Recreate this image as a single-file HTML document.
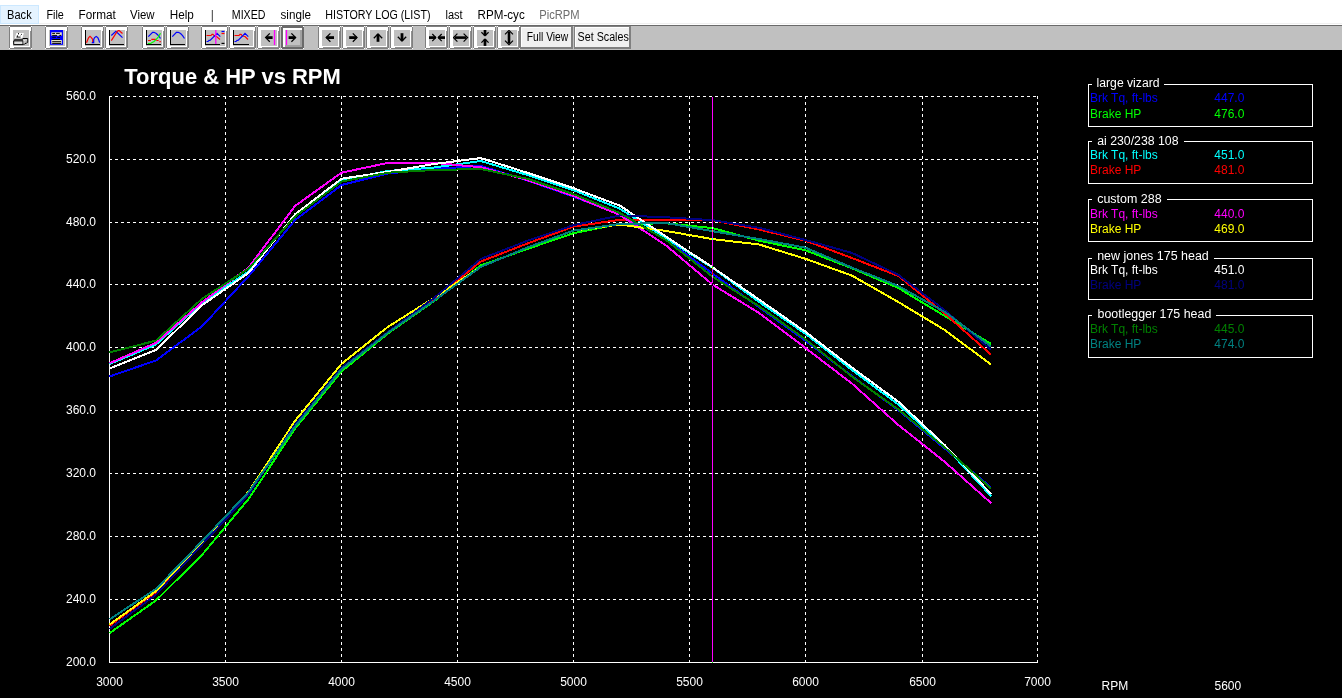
<!DOCTYPE html>
<html><head><meta charset="utf-8"><title>Torque &amp; HP vs RPM</title>
<style>
html,body{margin:0;padding:0;background:#000;}
body{width:1342px;height:698px;position:relative;overflow:hidden;font-family:"Liberation Sans",sans-serif;}
#menu{position:absolute;left:0;top:0;width:1342px;height:25px;background:#fff;}
#menu .hl{position:absolute;left:0;top:5px;width:39px;height:19px;background:#e5f3ff;border:1px solid #cce8ff;box-sizing:border-box;}
.m{position:absolute;top:7px;font-size:12px;line-height:14px;color:#000;white-space:nowrap;transform-origin:0 50%;}
#tbar{position:absolute;left:0;top:25px;width:1342px;height:25px;background:#c0c0c0;border-top:1px solid #6a6a6a;box-sizing:border-box;}
.b{position:absolute;top:0px;height:23px;box-sizing:border-box;border:1px solid #808080;background:#fff;}
.b i{position:absolute;width:1px;height:1px;background:#fff;}
.b i:nth-child(1){left:-1px;top:-1px}.b i:nth-child(2){right:-1px;top:-1px}.b i:nth-child(3){left:-1px;bottom:-1px}.b i:nth-child(4){right:-1px;bottom:-1px}
.b .f{position:absolute;left:3px;top:3px;right:1px;bottom:1px;background:#c0c0c0;border-right:1px solid #fff;border-bottom:1px solid #fff;box-shadow:1px 1px 0 #909090;}
.b .f svg{display:block}
.b.p{border:2px solid #6a6a6a;}
.b.p .f{left:2px;top:2px;right:0;bottom:0;border:none;box-shadow:none;border-right:2px solid #a0a0a0;border-bottom:2px solid #a0a0a0}
.b.p i:nth-child(1){left:-2px;top:-2px}.b.p i:nth-child(2){right:-2px;top:-2px}.b.p i:nth-child(3){left:-2px;bottom:-2px}.b.p i:nth-child(4){right:-2px;bottom:-2px}
.tb{position:absolute;top:0px;height:23px;box-sizing:border-box;border:1px solid #808080;border-right-width:2px;border-bottom-width:2px;background:#f0f0f0;box-shadow:inset 1px 1px 0 #fff;overflow:hidden;font-size:12px;}
.tb span{position:absolute;top:4px;line-height:14px;white-space:nowrap;color:#000;transform-origin:0 50%;}
#chart{position:absolute;left:0;top:0;}
#chart{fill:#fff}
#chart text,#menu text,.tb text{font-family:"Liberation Sans",sans-serif;font-size:12px;}
#menu text,.tb text{fill:#000}
#chart .g line{stroke:#fff;stroke-width:1;stroke-dasharray:3 3;shape-rendering:crispEdges;}
#chart .c polyline{fill:none;stroke-width:2;shape-rendering:crispEdges;stroke-linejoin:round;}
</style></head><body>
<svg id="chart" width="1342" height="698" viewBox="0 0 1342 698">
<rect x="0" y="50" width="1342" height="648" fill="#000"/>
<text x="124.3" y="84.2" style="font-size:22px;font-weight:bold" textLength="216.5" lengthAdjust="spacingAndGlyphs">Torque &amp; HP vs RPM</text>
<g class="g"><line x1="109" y1="96.5" x2="1038" y2="96.5"/><line x1="109" y1="159.5" x2="1038" y2="159.5"/><line x1="109" y1="222.5" x2="1038" y2="222.5"/><line x1="109" y1="284.5" x2="1038" y2="284.5"/><line x1="109" y1="347.5" x2="1038" y2="347.5"/><line x1="109" y1="410.5" x2="1038" y2="410.5"/><line x1="109" y1="473.5" x2="1038" y2="473.5"/><line x1="109" y1="536.5" x2="1038" y2="536.5"/><line x1="109" y1="599.5" x2="1038" y2="599.5"/><line x1="225.5" y1="96" x2="225.5" y2="662"/><line x1="341.5" y1="96" x2="341.5" y2="662"/><line x1="457.5" y1="96" x2="457.5" y2="662"/><line x1="573.5" y1="96" x2="573.5" y2="662"/><line x1="689.5" y1="96" x2="689.5" y2="662"/><line x1="805.5" y1="96" x2="805.5" y2="662"/><line x1="922.5" y1="96" x2="922.5" y2="662"/><line x1="1037.5" y1="96" x2="1037.5" y2="662"/></g>
<path d="M109.5 96V662.5H1038" fill="none" stroke="#fff" stroke-width="1" shape-rendering="crispEdges"/>
<g class="c"><polyline points="109.5,376.5 155.9,360.5 202.3,326.1 248.7,276.0 295.1,220.0 341.5,185.0 387.9,173.5 434.3,169.0 480.7,165.8 527.1,180.4 573.5,196.7 619.9,214.4 666.3,239.6 712.7,273.7 759.1,307.3 805.5,340.8 851.9,376.0 898.3,410.2 944.7,448.5 991.1,487.5" stroke="#0000ff"/>
<polyline points="109.5,633.2 155.9,600.5 202.3,554.6 248.7,498.8 295.1,428.6 341.5,371.4 387.9,333.5 434.3,301.0 480.7,265.5 527.1,249.0 573.5,233.2 619.9,224.0 666.3,223.3 712.7,228.1 759.1,240.7 805.5,250.3 851.9,268.3 898.3,288.0 944.7,316.0 991.1,344.0" stroke="#00ff00"/>
<polyline points="109.5,364.1 155.9,344.6 202.3,302.6 248.7,271.3 295.1,215.3 341.5,180.4 387.9,171.0 434.3,167.5 480.7,161.0 527.1,174.9 573.5,190.2 619.9,208.7 666.3,238.4 712.7,267.9 759.1,302.0 805.5,333.8 851.9,370.0 898.3,404.5 944.7,446.2 991.1,496.2" stroke="#00ffff"/>
<polyline points="109.5,625.8 155.9,592.1 202.3,543.0 248.7,494.0 295.1,425.0 341.5,368.5 387.9,332.0 434.3,299.4 480.7,261.6 527.1,243.6 573.5,226.6 619.9,219.8 666.3,219.9 712.7,220.2 759.1,229.5 805.5,240.7 851.9,258.0 898.3,276.0 944.7,313.5 991.1,354.7" stroke="#ff0000"/>
<polyline points="109.5,363.3 155.9,342.9 202.3,302.0 248.7,267.4 295.1,205.9 341.5,172.7 387.9,162.9 434.3,162.9 480.7,167.2 527.1,180.0 573.5,195.9 619.9,215.0 666.3,245.7 712.7,284.7 759.1,313.0 805.5,348.0 851.9,383.5 898.3,424.9 944.7,461.8 991.1,503.1" stroke="#ff00ff"/>
<polyline points="109.5,624.6 155.9,591.2 202.3,542.0 248.7,491.6 295.1,420.8 341.5,363.9 387.9,326.9 434.3,297.7 480.7,267.0 527.1,247.6 573.5,230.6 619.9,224.5 666.3,231.0 712.7,239.1 759.1,244.5 805.5,258.8 851.9,275.6 898.3,302.0 944.7,330.0 991.1,364.6" stroke="#ffff00"/>
<polyline points="109.5,368.5 155.9,350.0 202.3,305.0 248.7,272.8 295.1,214.3 341.5,178.7 387.9,171.8 434.3,164.0 480.7,158.0 527.1,172.7 573.5,188.2 619.9,205.6 666.3,236.7 712.7,267.4 759.1,299.6 805.5,331.9 851.9,367.5 898.3,401.7 944.7,445.1 991.1,493.9" stroke="#ffffff"/>
<polyline points="109.5,628.9 155.9,594.7 202.3,544.3 248.7,494.5 295.1,424.3 341.5,367.7 387.9,332.0 434.3,297.7 480.7,259.0 527.1,240.9 573.5,225.2 619.9,215.4 666.3,217.3 712.7,220.2 759.1,227.8 805.5,240.0 851.9,252.9 898.3,274.8 944.7,310.2 991.1,349.8" stroke="#000080"/>
<polyline points="109.5,352.5 155.9,340.6 202.3,298.6 248.7,268.5 295.1,216.5 341.5,181.6 387.9,172.7 434.3,170.0 480.7,169.0 527.1,178.7 573.5,194.2 619.9,213.0 666.3,240.2 712.7,276.8 759.1,306.3 805.5,339.4 851.9,376.5 898.3,409.5 944.7,447.4 991.1,488.6" stroke="#008000"/>
<polyline points="109.5,619.4 155.9,589.0 202.3,540.9 248.7,491.8 295.1,426.5 341.5,369.2 387.9,332.7 434.3,300.5 480.7,267.0 527.1,247.6 573.5,230.6 619.9,223.9 666.3,223.0 712.7,231.2 759.1,239.0 805.5,247.7 851.9,267.6 898.3,286.0 944.7,311.9 991.1,346.5" stroke="#008080"/></g>
<line x1="712.5" y1="97" x2="712.5" y2="663" stroke="#ff00ff" stroke-width="1" shape-rendering="crispEdges" style="mix-blend-mode:difference"/>
<g><text x="96" y="100" text-anchor="end">560.0</text><text x="96" y="163" text-anchor="end">520.0</text><text x="96" y="226" text-anchor="end">480.0</text><text x="96" y="288" text-anchor="end">440.0</text><text x="96" y="351" text-anchor="end">400.0</text><text x="96" y="414" text-anchor="end">360.0</text><text x="96" y="477" text-anchor="end">320.0</text><text x="96" y="540" text-anchor="end">280.0</text><text x="96" y="603" text-anchor="end">240.0</text><text x="96" y="666" text-anchor="end">200.0</text></g><g><text x="109.5" y="686" text-anchor="middle">3000</text><text x="225.5" y="686" text-anchor="middle">3500</text><text x="341.5" y="686" text-anchor="middle">4000</text><text x="457.5" y="686" text-anchor="middle">4500</text><text x="573.5" y="686" text-anchor="middle">5000</text><text x="689.5" y="686" text-anchor="middle">5500</text><text x="805.5" y="686" text-anchor="middle">6000</text><text x="922.5" y="686" text-anchor="middle">6500</text><text x="1037.5" y="686" text-anchor="middle">7000</text></g>
<text x="1101.5" y="690.3">RPM</text><text x="1214.5" y="690.3">5600</text>
<g><path d="M1092 84.5 H1088.5 V126.5 H1312.5 V84.5 H1164" fill="none" stroke="#fff" stroke-width="1" shape-rendering="crispEdges"/><text x="1096.6" y="86.8" fill="#fff" textLength="62.9" lengthAdjust="spacingAndGlyphs">large vizard</text><text x="1090" y="101.7" fill="#0000ff">Brk Tq, ft-lbs</text><text x="1214.3" y="101.7" fill="#0000ff">447.0</text><text x="1090" y="117.5" fill="#00ff00">Brake HP</text><text x="1214.3" y="117.5" fill="#00ff00">476.0</text><path d="M1092 141.5 H1088.5 V183.5 H1312.5 V141.5 H1184" fill="none" stroke="#fff" stroke-width="1" shape-rendering="crispEdges"/><text x="1097.2" y="144.5" fill="#fff" textLength="81.3" lengthAdjust="spacingAndGlyphs">ai 230/238 108</text><text x="1090" y="159.4" fill="#00ffff">Brk Tq, ft-lbs</text><text x="1214.3" y="159.4" fill="#00ffff">451.0</text><text x="1090" y="174.3" fill="#ff0000">Brake HP</text><text x="1214.3" y="174.3" fill="#ff0000">481.0</text><path d="M1092 199.5 H1088.5 V241.5 H1312.5 V199.5 H1167" fill="none" stroke="#fff" stroke-width="1" shape-rendering="crispEdges"/><text x="1097.2" y="202.7" fill="#fff" textLength="64.5" lengthAdjust="spacingAndGlyphs">custom 288</text><text x="1090" y="217.6" fill="#ff00ff">Brk Tq, ft-lbs</text><text x="1214.3" y="217.6" fill="#ff00ff">440.0</text><text x="1090" y="232.5" fill="#ffff00">Brake HP</text><text x="1214.3" y="232.5" fill="#ffff00">469.0</text><path d="M1092 258.5 H1088.5 V299.5 H1312.5 V258.5 H1214" fill="none" stroke="#fff" stroke-width="1" shape-rendering="crispEdges"/><text x="1097.2" y="259.6" fill="#fff" textLength="111.6" lengthAdjust="spacingAndGlyphs">new jones 175 head</text><text x="1090" y="274.4" fill="#ffffff">Brk Tq, ft-lbs</text><text x="1214.3" y="274.4" fill="#ffffff">451.0</text><text x="1090" y="289.3" fill="#000080">Brake HP</text><text x="1214.3" y="289.3" fill="#000080">481.0</text><path d="M1092 315.5 H1088.5 V357.5 H1312.5 V315.5 H1216" fill="none" stroke="#fff" stroke-width="1" shape-rendering="crispEdges"/><text x="1097.5" y="317.7" fill="#fff" textLength="113.8" lengthAdjust="spacingAndGlyphs">bootlegger 175 head</text><text x="1090" y="332.6" fill="#008000">Brk Tq, ft-lbs</text><text x="1214.3" y="332.6" fill="#008000">445.0</text><text x="1090" y="347.5" fill="#008080">Brake HP</text><text x="1214.3" y="347.5" fill="#008080">474.0</text></g>
</svg>
<div id="menu"><div style="position:absolute;left:0;top:23px;width:1342px;height:1px;background:#f0f0f0"></div><div class="hl"></div><svg width="700" height="25" style="position:absolute;left:0;top:0"><text x="7.1" y="18.6" textLength="24.6" lengthAdjust="spacingAndGlyphs" style="font-size:12px;">Back</text><text x="46.4" y="18.6" textLength="17.4" lengthAdjust="spacingAndGlyphs" style="font-size:12px;">File</text><text x="78.5" y="18.6" textLength="37.3" lengthAdjust="spacingAndGlyphs" style="font-size:12px;">Format</text><text x="130.0" y="18.6" textLength="24.5" lengthAdjust="spacingAndGlyphs" style="font-size:12px;">View</text><text x="169.7" y="18.6" textLength="24.1" lengthAdjust="spacingAndGlyphs" style="font-size:12px;">Help</text><text x="211.0" y="18.6" textLength="2.5" lengthAdjust="spacingAndGlyphs" style="font-size:12px;">|</text><text x="231.8" y="18.6" textLength="33.7" lengthAdjust="spacingAndGlyphs" style="font-size:12px;">MIXED</text><text x="280.5" y="18.6" textLength="30.5" lengthAdjust="spacingAndGlyphs" style="font-size:12px;">single</text><text x="325.3" y="18.6" textLength="105.2" lengthAdjust="spacingAndGlyphs" style="font-size:12px;">HISTORY LOG (LIST)</text><text x="445.5" y="18.6" textLength="17.2" lengthAdjust="spacingAndGlyphs" style="font-size:12px;">last</text><text x="477.6" y="18.6" textLength="47.1" lengthAdjust="spacingAndGlyphs" style="font-size:12px;">RPM-cyc</text><text x="539.3" y="18.6" textLength="40.3" lengthAdjust="spacingAndGlyphs" style="font-size:12px;fill:#6d6d6d">PicRPM</text></svg></div>
<div id="tbar"><div class="b" style="left:9px;width:23px"><i></i><i></i><i></i><i></i><div class="f"><svg width="16" height="16" viewBox="0 0 16 16"><path d="M3.4 3H10.8L9.4 8H1.8Z" fill="#fff"/><path d="M5.5 3v1.4M8.9 4L7.7 5.2M4.4 5.3V7.1M3.4 7.1H7.6" stroke="#000" stroke-width="0.9" fill="none"/><path d="M0.7 10.9H10V14.6H0.7Z" fill="#dcdcdc" stroke="#000" stroke-width="1" stroke-linejoin="miter"/><path d="M1.4 10.4V9.8H10" fill="none" stroke="#000" stroke-width="1"/><path d="M9.6 8.5H14.7V12.3L10.4 14.6" fill="none" stroke="#000" stroke-width="1" stroke-linejoin="miter"/><path d="M10.6 10.4L14.1 9.1V11.9L10.6 13.8Z" fill="#e4e4e4"/><path d="M10.8 12.6L13.8 9.8M11.6 13.2L14 11" stroke="#8a8a8a" stroke-width="0.7"/></svg></div></div><div class="b" style="left:45px;width:23px"><i></i><i></i><i></i><i></i><div class="f"><svg width="16" height="16" viewBox="0 0 16 16"><rect x="1" y="0" width="13" height="14.8" fill="#0000ff"/><rect x="2.3" y="2.3" width="10.5" height="3.4" fill="#e8e4c8"/><rect x="2.3" y="10" width="10.5" height="3.8" fill="#e8e4c8"/><path d="M3.2 3.4H6M7.1 3.4H10.8M3.2 5.4H8M10.3 5.4H12.2M3.2 7.3H6.9M8.3 7.3H11M3.2 9.5H11M3.2 11.7H12M3.2 13.4H12" stroke="#000" stroke-width="1"/></svg></div></div><div class="b" style="left:81px;width:23px"><i></i><i></i><i></i><i></i><div class="f"><svg width="16" height="16" viewBox="0 0 16 16"><path d="M0.5 0V14.5H15" fill="none" stroke="#000" stroke-width="1" shape-rendering="crispEdges"/><path d="M1.5 12.7L2.8 9.5 3.7 7.6 5 6.4 6.4 7.6 7.7 9.5 7.7 12.7" fill="none" stroke="#f00" stroke-width="1.2"/><path d="M6.8 12.7H8.7V9.5L9.6 7.6 11.2 6.4 12.8 7.6 13.8 9.9 14.6 12.7" fill="none" stroke="#00f" stroke-width="1.2"/></svg></div></div><div class="b" style="left:105px;width:23px"><i></i><i></i><i></i><i></i><div class="f"><svg width="16" height="16" viewBox="0 0 16 16"><path d="M0.5 0V14.5H15" fill="none" stroke="#000" stroke-width="1" shape-rendering="crispEdges"/><path d="M2.3 5.5L6.9 1.4 13.5 7.6" fill="none" stroke="#00f" stroke-width="1.2"/><path d="M2.3 10.6L8.2 1.4 9.8 0.3 13.5 3.5" fill="none" stroke="#f00" stroke-width="1.2"/></svg></div></div><div class="b" style="left:142px;width:23px"><i></i><i></i><i></i><i></i><div class="f"><svg width="16" height="16" viewBox="0 0 16 16"><path d="M0.5 0V14.5H15" fill="none" stroke="#000" stroke-width="1" shape-rendering="crispEdges"/><path d="M2.3 6.7L6.6 2.3H8L10.3 3.5 12.6 5.7 14.5 8.5" fill="none" stroke="#00f" stroke-width="1.2"/><path d="M2 10.5H4.9M5.3 9.4H9.9M10.3 10.5H12.6M13.3 11.7H15" fill="none" stroke="#f00" stroke-width="1.1"/><path d="M1.8 13.5H4.8L6.2 12.4 8 11.5 10 9.6 12.2 7.1 14.5 3.2" fill="none" stroke="#0f0" stroke-width="1.2"/></svg></div></div><div class="b" style="left:166px;width:23px"><i></i><i></i><i></i><i></i><div class="f"><svg width="16" height="16" viewBox="0 0 16 16"><path d="M0.5 0V14.5H15" fill="none" stroke="#000" stroke-width="1" shape-rendering="crispEdges"/><path d="M2.3 6.7L6.4 2.3H8.3L10.6 3.5 12.6 5.7 14.5 8.5" fill="none" stroke="#00f" stroke-width="1.2"/></svg></div></div><div class="b" style="left:201px;width:27px"><i></i><i></i><i></i><i></i><div class="f"><svg width="20" height="16" viewBox="0 0 20 16"><path d="M0.5 0V14.5H15" fill="none" stroke="#000" stroke-width="1" shape-rendering="crispEdges"/><path d="M1.5 5.5H6L7 4.4H8L9 5.5 11.5 6.5 15 9.5" fill="none" stroke="#f00" stroke-width="1.1"/><path d="M1.5 11.5H3L4 10.4H5L9.5 6 12 3.3 15.3 6.7" fill="none" stroke="#00f" stroke-width="1.1"/><path d="M10.8 0V14" stroke="#f0f" stroke-width="1.3"/><path d="M16.5 1.5H19.5" stroke="#00f" stroke-width="1.2"/><path d="M16.5 3.5H19.5" stroke="#f00" stroke-width="1.2"/><path d="M16.5 13.4H19.5" stroke="#000" stroke-width="1.2"/></svg></div></div><div class="b" style="left:229px;width:27px"><i></i><i></i><i></i><i></i><div class="f"><svg width="20" height="16" viewBox="0 0 20 16"><path d="M0.5 0V14.5H15.5" fill="none" stroke="#000" stroke-width="1" shape-rendering="crispEdges"/><path d="M1.5 5.5H6L7 4.4H8L9.5 6 12 6.5 15 9.5" fill="none" stroke="#f00" stroke-width="1.1"/><path d="M1.5 11.5H3L4 10.4H5L9.5 6 12 3.3 15.3 6.7" fill="none" stroke="#00f" stroke-width="1.1"/></svg></div></div><div class="b" style="left:257px;width:23px"><i></i><i></i><i></i><i></i><div class="f"><svg width="16" height="16" viewBox="0 0 16 16"><g transform="translate(8.4 7.6) rotate(0)"><path d="M-3.4 0H3.2" stroke="#000" stroke-width="2.8"/><path d="M0.4 -4.2L-3.8 0 0.4 4.2" fill="none" stroke="#000" stroke-width="1.3"/></g><path d="M13.5 0V15" stroke="#f0f" stroke-width="1.3"/></svg></div></div><div class="b p" style="left:281px;width:23px"><i></i><i></i><i></i><i></i><div class="f"><svg width="16" height="16" viewBox="0 0 16 16"><g transform="translate(6.8 7.6) rotate(180)"><path d="M-3.4 0H3.2" stroke="#000" stroke-width="2.8"/><path d="M0.4 -4.2L-3.8 0 0.4 4.2" fill="none" stroke="#000" stroke-width="1.3"/></g><path d="M1.5 0V15" stroke="#f0f" stroke-width="1.3"/></svg></div></div><div class="b" style="left:318px;width:23px"><i></i><i></i><i></i><i></i><div class="f"><svg width="16" height="16" viewBox="0 0 16 16"><g transform="translate(8 7.6) rotate(0)"><path d="M-3.4 0H4" stroke="#000" stroke-width="2.8"/><path d="M0.4 -4.2L-3.8 0 0.4 4.2" fill="none" stroke="#000" stroke-width="1.3"/></g></svg></div></div><div class="b" style="left:342px;width:23px"><i></i><i></i><i></i><i></i><div class="f"><svg width="16" height="16" viewBox="0 0 16 16"><g transform="translate(7.2 7.6) rotate(180)"><path d="M-3.4 0H4" stroke="#000" stroke-width="2.8"/><path d="M0.4 -4.2L-3.8 0 0.4 4.2" fill="none" stroke="#000" stroke-width="1.3"/></g></svg></div></div><div class="b" style="left:366px;width:23px"><i></i><i></i><i></i><i></i><div class="f"><svg width="16" height="16" viewBox="0 0 16 16"><g transform="translate(8 7.8) rotate(90)"><path d="M-3.4 0H4" stroke="#000" stroke-width="2.8"/><path d="M0.4 -4.2L-3.8 0 0.4 4.2" fill="none" stroke="#000" stroke-width="1.3"/></g></svg></div></div><div class="b" style="left:390px;width:23px"><i></i><i></i><i></i><i></i><div class="f"><svg width="16" height="16" viewBox="0 0 16 16"><g transform="translate(8 7.2) rotate(270)"><path d="M-3.4 0H4" stroke="#000" stroke-width="2.8"/><path d="M0.4 -4.2L-3.8 0 0.4 4.2" fill="none" stroke="#000" stroke-width="1.3"/></g></svg></div></div><div class="b" style="left:425px;width:23px"><i></i><i></i><i></i><i></i><div class="f"><svg width="16" height="16" viewBox="0 0 16 16"><g transform="translate(3.5 7.6) rotate(180)"><path d="M-3.2 0H3.5" stroke="#000" stroke-width="2.7"/><path d="M0.2 -3.6L-3.2 0 0.2 3.6" fill="none" stroke="#000" stroke-width="1.2"/></g><g transform="translate(12.5 7.6) rotate(0)"><path d="M-3.2 0H3.5" stroke="#000" stroke-width="2.7"/><path d="M0.2 -3.6L-3.2 0 0.2 3.6" fill="none" stroke="#000" stroke-width="1.2"/></g></svg></div></div><div class="b" style="left:449px;width:23px"><i></i><i></i><i></i><i></i><div class="f"><svg width="16" height="16" viewBox="0 0 16 16"><path d="M1.6 7.6H13.4" stroke="#000" stroke-width="2.6"/><path d="M4.4 3.6L0.4 7.6 4.4 11.6M10.6 3.6L14.6 7.6 10.6 11.6" fill="none" stroke="#000" stroke-width="1.2"/></svg></div></div><div class="b" style="left:473px;width:23px"><i></i><i></i><i></i><i></i><div class="f"><svg width="16" height="16" viewBox="0 0 16 16"><g transform="translate(8 2.4) rotate(270)"><path d="M-3.2 0H3.5" stroke="#000" stroke-width="2.7"/><path d="M0.2 -3.6L-3.2 0 0.2 3.6" fill="none" stroke="#000" stroke-width="1.2"/></g><g transform="translate(8 12.4) rotate(90)"><path d="M-3.2 0H3.5" stroke="#000" stroke-width="2.7"/><path d="M0.2 -3.6L-3.2 0 0.2 3.6" fill="none" stroke="#000" stroke-width="1.2"/></g></svg></div></div><div class="b" style="left:497px;width:23px"><i></i><i></i><i></i><i></i><div class="f"><svg width="16" height="16" viewBox="0 0 16 16"><path d="M8 1.6V13.4" stroke="#000" stroke-width="2.6"/><path d="M4 4.4L8 0.4 12 4.4M4 10.6L8 14.6 12 10.6" fill="none" stroke="#000" stroke-width="1.2"/></svg></div></div><div class="tb" style="left:520px;width:53px"><svg width="60" height="23"><text x="5.7" y="13.9" textLength="41.6" lengthAdjust="spacingAndGlyphs">Full View</text></svg></div><div class="tb" style="left:574px;width:57px"><svg width="60" height="23"><text x="2.6" y="13.9" textLength="51.2" lengthAdjust="spacingAndGlyphs">Set Scales</text></svg></div></div>
</body></html>
